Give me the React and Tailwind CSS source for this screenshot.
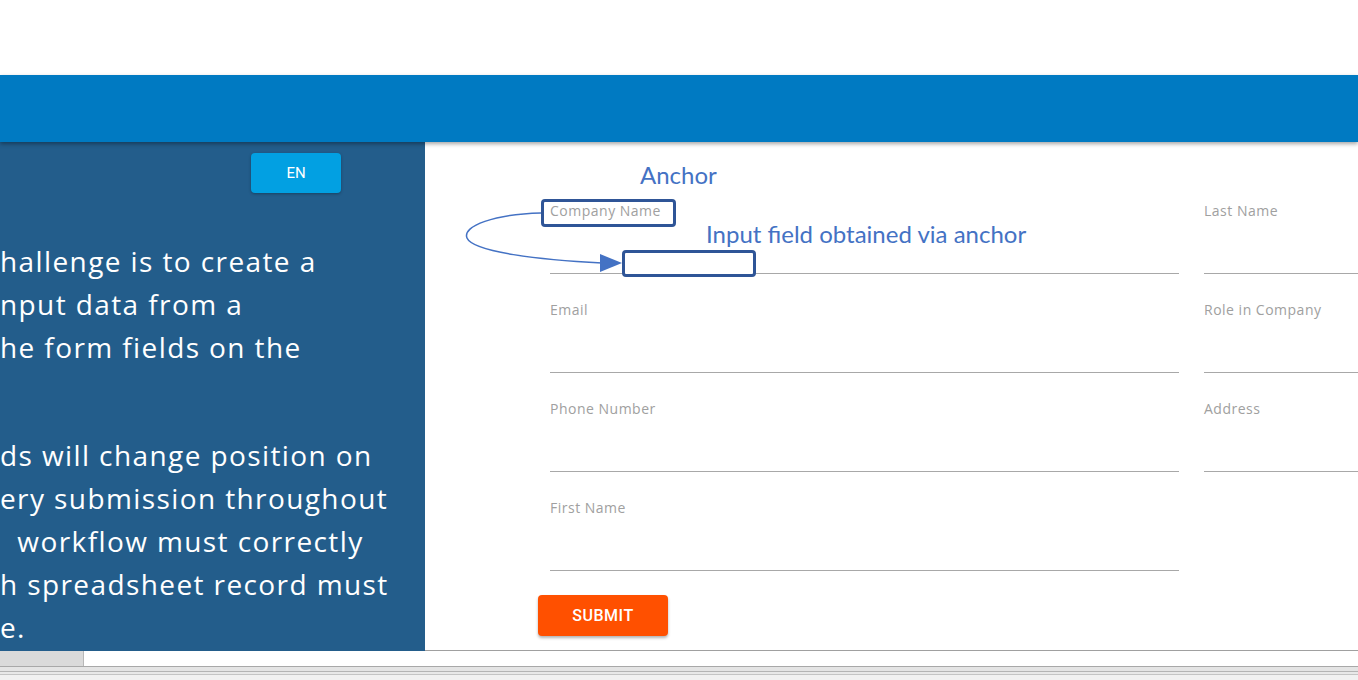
const leftLines1 = ["hallenge is to create a", "nput data from a", "he form fields on the", "\u00a0"];
const leftLines2 = ["ds will change position on", "ery submission throughout", "\u00a0 workflow must correctly", "h spreadsheet record must", "e."];

const Field = ({ label }) => (
  <div className="flex flex-col">
    <label className="h-4 text-[14px] leading-4 tracking-[0.5px] text-[#a0a0a0]">{label}</label>
    <div className="h-[55px] border-b border-[#a8a8a8]" />
  </div>
);

const App = () => {
  return (
    <div className="relative h-[680px] w-[1358px] overflow-hidden bg-white" style={{ fontFamily: '"Open Sans", sans-serif' }}>
      <div className="h-[75px] bg-white" />
      <div className="relative z-10 h-[67px] bg-[#007ac2] shadow-[0_2px_4px_rgba(0,0,0,0.35)]" />

      <div className="flex h-[509px]">
        {/* left info panel */}
        <div className="w-[425px] shrink-0 overflow-hidden bg-[#235d8b] text-white">
          <div className="flex justify-start pl-[251px] pt-[11px]">
            <button className="h-10 w-[90px] rounded-sm bg-[#02a0e2] text-[15px] font-normal shadow-[0_1px_3px_rgba(0,0,0,0.3)]" style={{ fontFamily: "Roboto, sans-serif" }}>
              EN
            </button>
          </div>
          <div className="mt-[47px] text-[28px] leading-[43px] tracking-[1.4px] whitespace-pre">
            <div>
              {leftLines1.map((l, i) => (
                <div key={i} className="h-[43px]">{l}</div>
              ))}
            </div>
            <div className="mt-[22px]">
              {leftLines2.map((l, i) => (
                <div key={i} className="h-[43px]">{l}</div>
              ))}
            </div>
          </div>
        </div>

        {/* form */}
        <div className="flex-1 overflow-hidden border-b border-[#a0a0a0] pl-[113px] pt-[61px]">
          <div className="ml-3 grid grid-cols-[629px_629px] gap-x-[25px] gap-y-7">
            <Field label="Company Name" />
            <Field label="Last Name" />
            <Field label="Email" />
            <Field label="Role in Company" />
            <Field label="Phone Number" />
            <Field label="Address" />
            <Field label="First Name" />
          </div>
          <button className="mt-[24px] h-[41px] w-[130px] rounded-sm bg-[#ff5000] text-[16px] font-medium tracking-[0.5px] text-white shadow-[0_2px_3px_rgba(0,0,0,0.3)]" style={{ fontFamily: "Roboto, sans-serif" }}>
            SUBMIT
          </button>
        </div>
      </div>

      {/* window scrollbar strip */}
      <div className="flex h-[15px]">
        <div className="w-[83px] bg-[#dadada]" />
        <div className="flex-1 border-l border-[#b8b8b8] bg-white" />
      </div>
      <div className="h-px bg-[#a8a8a8]" />
      <div className="h-1 bg-[#e4e4e4]" />
      <div className="h-px bg-[#b4b4b4]" />
      <div className="h-0.5 bg-[#e8e8e8]" />
      <div className="h-px bg-[#c4c4c4]" />
      <div className="h-[10px] bg-[#f1f1f1]" />

      {/* annotations */}
      <div className="pointer-events-none absolute left-[640px] top-[160px] text-[24px] leading-[30px] text-[#4472c4]" style={{ fontFamily: "Lato, sans-serif" }}>
        Anchor
      </div>
      <div className="pointer-events-none absolute left-[706px] top-[219px] text-[24px] leading-[30px] text-[#4472c4]" style={{ fontFamily: "Lato, sans-serif" }}>
        Input field obtained via anchor
      </div>
      <div className="absolute left-[541px] top-[199px] h-7 w-[135px] rounded-[4px] border-[3px] border-[#2f5597] bg-transparent" />
      <div className="absolute left-[622px] top-[250px] h-[27px] w-[134px] rounded-[4px] border-[3px] border-[#2f5597] bg-white" />
      <svg className="pointer-events-none absolute left-0 top-0" width="1358" height="680">
        <path d="M541 213 C 495 214, 462 226, 467 238 C 473 252, 540 260, 602 263" fill="none" stroke="#4472c4" strokeWidth="1.5" />
        <polygon points="600,254 622,263 600,272" fill="#4472c4" />
      </svg>
    </div>
  );
};

export default App;
